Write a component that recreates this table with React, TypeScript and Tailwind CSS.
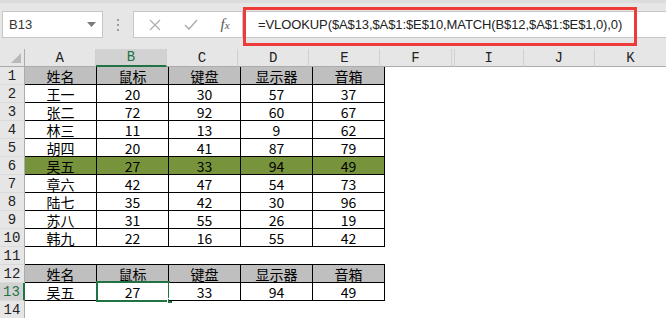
import React from "react";

type Cell = string;

const rows: { n: number; cells: Cell[]; kind: "head" | "data" | "hl" | "empty" | "blank" }[] = [
  { n: 1, cells: ["姓名", "鼠标", "键盘", "显示器", "音箱"], kind: "head" },
  { n: 2, cells: ["王一", "20", "30", "57", "37"], kind: "data" },
  { n: 3, cells: ["张二", "72", "92", "60", "67"], kind: "data" },
  { n: 4, cells: ["林三", "11", "13", "9", "62"], kind: "data" },
  { n: 5, cells: ["胡四", "20", "41", "87", "79"], kind: "data" },
  { n: 6, cells: ["吴五", "27", "33", "94", "49"], kind: "hl" },
  { n: 7, cells: ["章六", "42", "47", "54", "73"], kind: "data" },
  { n: 8, cells: ["陆七", "35", "42", "30", "96"], kind: "data" },
  { n: 9, cells: ["苏八", "31", "55", "26", "19"], kind: "data" },
  { n: 10, cells: ["韩九", "22", "16", "55", "42"], kind: "data" },
  { n: 11, cells: [], kind: "empty" },
  { n: 12, cells: ["姓名", "鼠标", "键盘", "显示器", "音箱"], kind: "head" },
  { n: 13, cells: ["吴五", "27", "33", "94", "49"], kind: "data" },
  { n: 14, cells: [], kind: "blank" },
];

const cellFont = "font-['Noto_Sans_CJK_SC','Noto_Sans',sans-serif] text-[14px]";
const headFont = "font-['Liberation_Mono','DejaVu_Sans_Mono',monospace] text-[14px]";

function Toolbar() {
  return (
    <div className="relative h-[49px] bg-[#e6e6e6] border-t-[3px] border-[#dcdcdc] flex items-start pt-[8px] pl-[2px] font-['Liberation_Sans',Arial,sans-serif]">
      {/* name box */}
      <div className="w-[101px] h-[27px] bg-white border border-[#c6c6c6] flex items-center justify-between pl-[6px] pr-[6px]">
        <span className="text-[13px] text-[#333]">B13</span>
        <svg width="9" height="5" viewBox="0 0 9 5">
          <path d="M0 0 H9 L4.5 5 Z" fill="#7a7a7a" />
        </svg>
      </div>
      {/* splitter dots */}
      <div className="w-[30px] h-[27px] flex flex-col items-center justify-center gap-[3px]">
        <span className="w-[2px] h-[2px] bg-[#9a9a9a]" />
        <span className="w-[2px] h-[2px] bg-[#9a9a9a]" />
        <span className="w-[2px] h-[2px] bg-[#9a9a9a]" />
      </div>
      {/* cancel / enter / fx */}
      <div className="w-[110px] h-[27px] bg-white border border-[#c6c6c6] flex items-center">
        <div className="w-[37px] flex justify-center pl-[4px]">
          <svg width="12" height="12" viewBox="0 0 12 12">
            <path d="M1 1 L11 11 M11 1 L1 11" stroke="#b0b0b0" strokeWidth="1.3" />
          </svg>
        </div>
        <div className="w-[37px] flex justify-center pl-[3px]">
          <svg width="14" height="11" viewBox="0 0 14 11">
            <path d="M1 6 L5 10 L13 1" stroke="#b0b0b0" strokeWidth="1.6" fill="none" />
          </svg>
        </div>
        <div className="w-[34px] flex justify-center">
          <span className="font-['Liberation_Serif',serif] italic text-[15px] text-[#555] leading-none">
            f<span className="text-[11px]">x</span>
          </span>
        </div>
      </div>
      {/* formula bar */}
      <div className="flex-1 h-[27px] bg-white border border-[#c6c6c6] border-r-0 flex items-center pl-[14px]">
        <span className="text-[13px] text-[#222] whitespace-nowrap tracking-[-0.1px]">
          =VLOOKUP($A$13,$A$1:$E$10,MATCH(B$12,$A$1:$E$1,0),0)
        </span>
      </div>
      {/* red highlight frame around the formula */}
      <div className="absolute left-[243px] top-[4px] w-[394px] h-[39px] border-[3px] border-[#ef3a3a]" />
    </div>
  );
}

const colLetters = ["A", "B", "C", "D", "E", "F"];

function ColumnHeader() {
  return (
    <div className={`flex h-[18px] bg-[#e6e6e6] ${headFont} text-[#222] leading-[16px]`}>
      <div className="w-[25px] h-full border-r border-b border-[#ababab] relative">
        <svg className="absolute right-[3px] bottom-[3px]" width="10" height="10" viewBox="0 0 10 10">
          <path d="M10 0 V10 H0 Z" fill="#b9b9b9" />
        </svg>
      </div>
      {colLetters.map((c) => {
        const sel = c === "B";
        return (
          <div
            key={c}
            className={`w-[72px] h-full flex items-center justify-center border-r border-[#d0d0d0] ${
              sel ? "bg-[#d2d2d2] text-[#217346] border-b-2 border-b-[#217346]" : "border-b border-b-[#ababab]"
            }`}
          >
            {c}
          </div>
        );
      })}
      <div className="w-[3px] h-full border-r border-[#d0d0d0] border-b border-b-[#ababab]" />
      <div className="w-[70px] h-full flex items-center justify-center border-r border-[#d0d0d0] border-b border-b-[#ababab]">I</div>
      <div className="w-[72px] h-full flex items-center justify-center border-r border-[#d0d0d0] border-b border-b-[#ababab]">J</div>
      <div className="w-[72px] h-full flex items-center justify-center border-b border-b-[#ababab]">K</div>
    </div>
  );
}

function Row({ n, cells, kind }: (typeof rows)[number]) {
  const selRow = n === 13;
  const bg = kind === "head" ? "bg-[#bfbfbf]" : kind === "hl" ? "bg-[#77933c]" : "bg-white";
  return (
    <div className="flex h-[18px]">
      <div
        className={`w-[25px] h-full flex items-center justify-center leading-[16px] ${headFont} ${
          selRow
            ? "bg-[#d2d2d2] text-[#217346] border-r-2 border-[#217346]"
            : "bg-[#e6e6e6] text-[#222] border-r border-[#ababab]"
        } border-b border-b-[#dadada]`}
      >
        {n}
      </div>
      {[0, 1, 2, 3, 4].map((i) => {
        if (kind === "blank") return <div key={i} className="w-[72px] h-full" />;
        if (kind === "empty")
          return <div key={i} className="w-[72px] h-full border-b border-black" />;
        const isSel = selRow && i === 1;
        return (
          <div
            key={i}
            className={`relative w-[72px] h-full border-r border-b border-black ${bg} ${cellFont} text-black flex items-end justify-center`}
          >
            <span className="block leading-[16px] h-[16px]">{cells[i]}</span>
            {isSel && (
              <div className="absolute -left-[1px] -top-[2px] w-[74px] h-[21px] border-2 border-[#217346]">
                <div className="absolute left-[69px] top-[15px] w-[6px] h-[6px] bg-[#217346] border border-white" />
              </div>
            )}
          </div>
        );
      })}
      <div className="flex-1 h-full bg-white" />
    </div>
  );
}

export default function App() {
  return (
    <div className="w-[666px] h-[318px] overflow-hidden bg-white">
      <Toolbar />
      <ColumnHeader />
      {rows.map((r) => (
        <Row key={r.n} {...r} />
      ))}
    </div>
  );
}
